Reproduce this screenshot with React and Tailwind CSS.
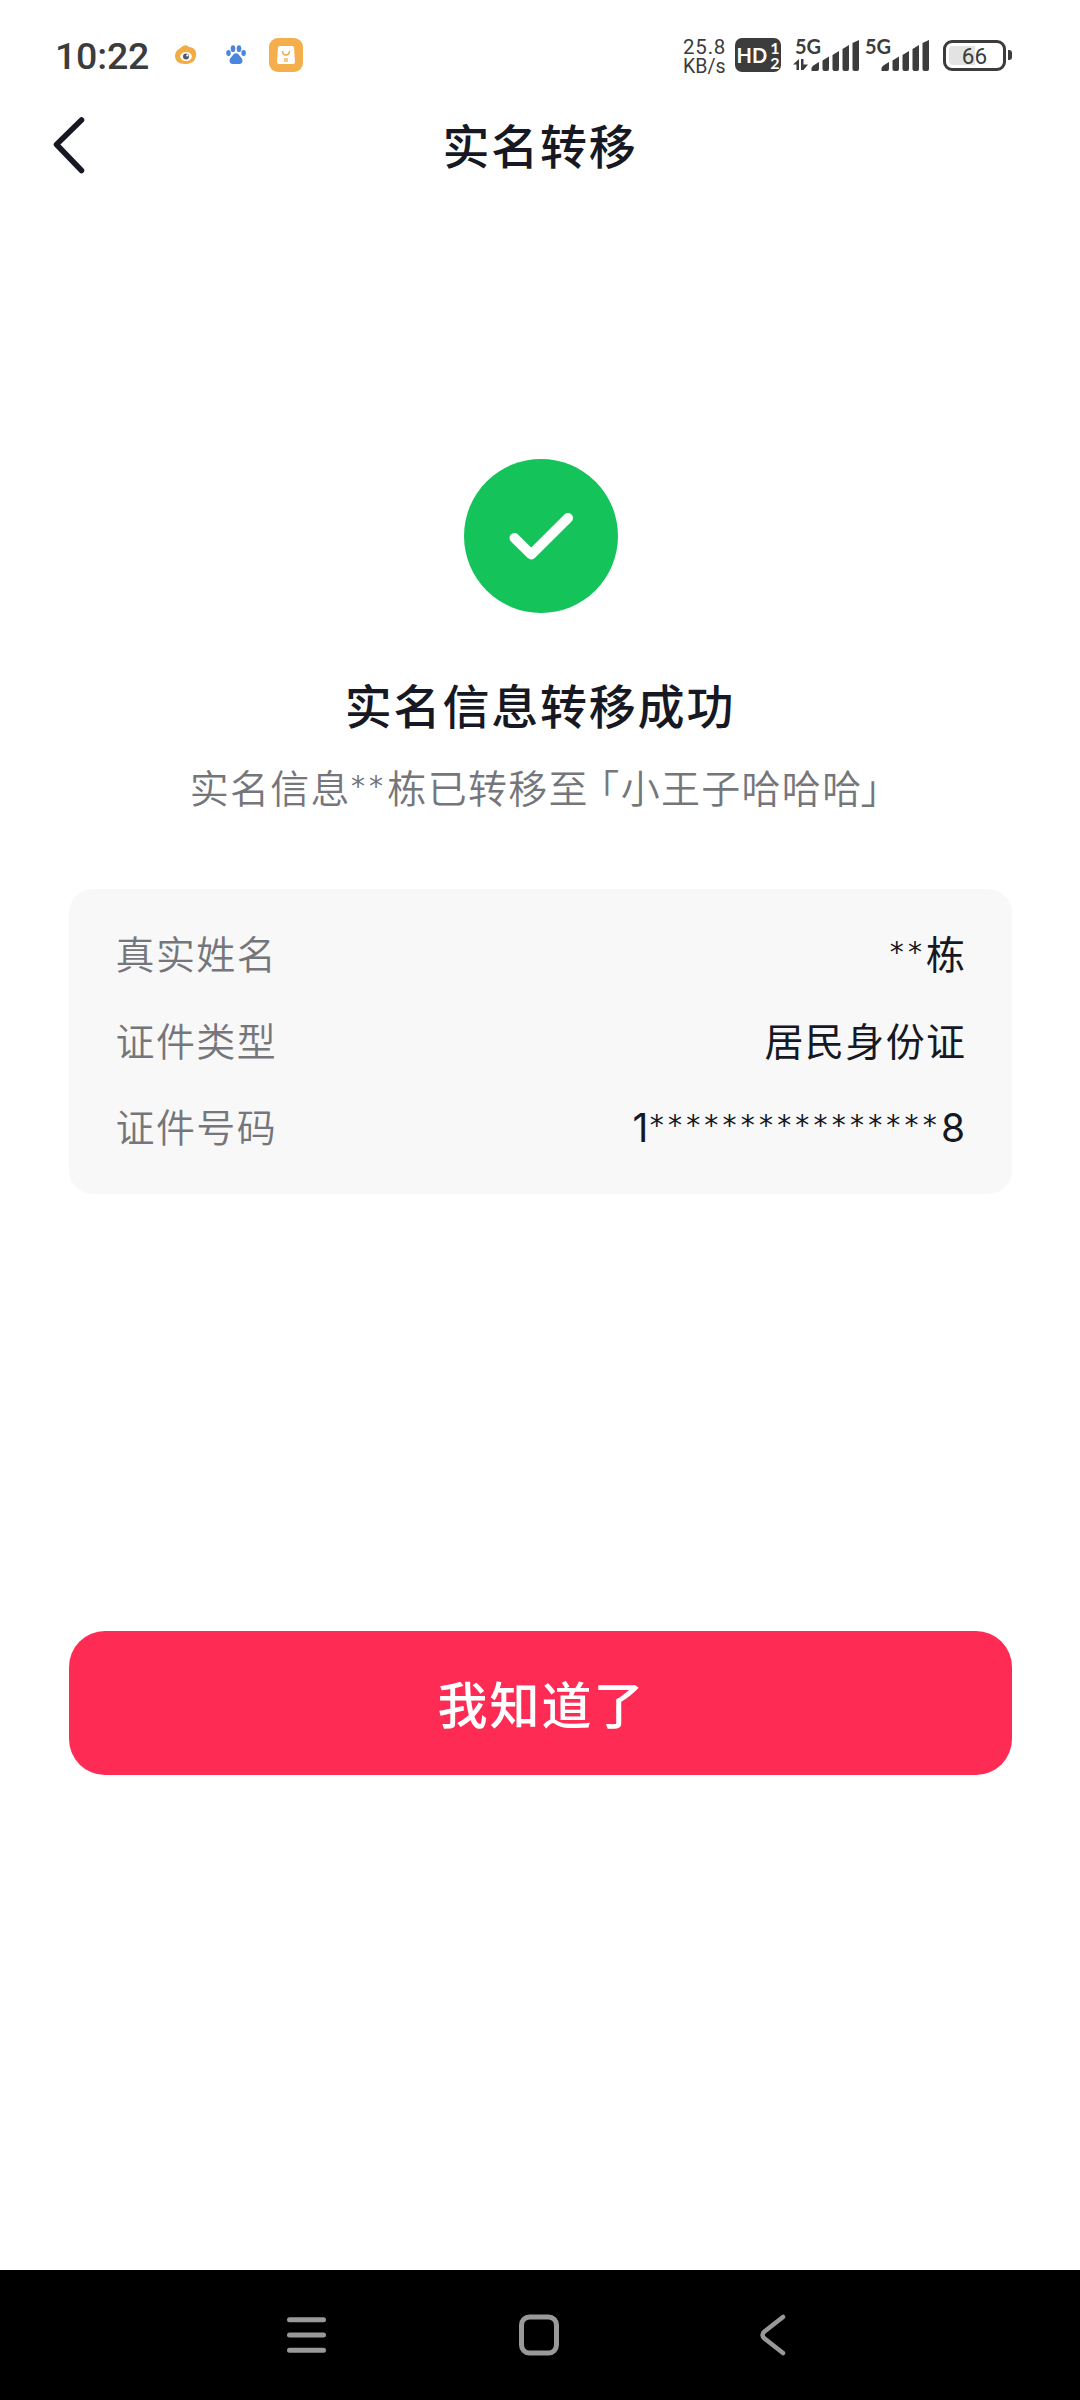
import React from 'react';

const details = [
  { label: '真实姓名', stars: '**', end: '栋' },
  { label: '证件类型', end: '居民身份证' },
  { label: '证件号码', start: '1', stars: '****************', end: '8' },
];

function Stars({ children }) {
  return (
    <span className="align-[7px] font-['DejaVu_Sans',sans-serif] text-[28px] font-normal leading-none tracking-[4.200px]">{children}</span>
  );
}

function SignalBars({ arrows }) {
  return (
    <svg width="68" height="34" viewBox="0 0 68 34" fill="#3c3c3c" className="block">
      {arrows && (
        <path d="M0 26.500l6-5.500v11H3.500v-5.500zM8 32V21h2.500v5.500H15L10.500 32z" />
      )}
      <path d="M18.500 33v-3q0-2 7.500-6v7q0 2-2 2z" />
      <path d="M29.500 31v-8.500l6.500-4V31q0 2-2 2h-2.500q-2 0-2-2z" />
      <path d="M39.500 31V17l6.500-4v18q0 2-2 2h-2.500q-2 0-2-2z" />
      <path d="M49.500 31V11L56 7v24q0 2-2 2h-2.500q-2 0-2-2z" />
      <path d="M59.500 31V5L66 2v29q0 2-2 2h-2.500q-2 0-2-2z" />
    </svg>
  );
}

function Signal({ arrows }) {
  return (
    <div className="relative h-[34px] w-[68px]">
      <SignalBars arrows={arrows} />
      <span className="absolute -top-px left-[2px] font-['Lato',sans-serif] text-[20px] font-bold leading-[18px]">5G</span>
    </div>
  );
}

function StatusBar() {
  return (
    <div className="flex h-[110px] items-center pl-[55px] pr-[68px] font-['Roboto',sans-serif] text-[#3c3c3c]">
      <span className="w-[120px] pt-[3px] text-[37.500px] font-medium leading-none tracking-[-0.200px]">10:22</span>
      <svg width="22" height="20" viewBox="0 0 22 20" className="block">
        <path d="M8 1c2-1 4-1 6 1 5 0 8 4 7 9-1 6-5 8-11 8C4 19 0 16 0 11c0-4 2-6 4-7s2-2 4-3z" fill="#f3ac45" />
        <ellipse cx="11" cy="11.5" rx="5.8" ry="4.6" fill="#fff" />
        <circle cx="11" cy="11.6" r="3" fill="#55586a" />
        <circle cx="12.3" cy="10.4" r="1.1" fill="#fff" />
      </svg>
      <svg width="20" height="20" viewBox="0 0 20 20" fill="#4a86de" className="ml-[29px] block">
        <ellipse cx="2.5" cy="8" rx="2.3" ry="3" />
        <ellipse cx="7" cy="3.7" rx="2.3" ry="3.4" />
        <ellipse cx="13" cy="3.7" rx="2.3" ry="3.4" />
        <ellipse cx="17.6" cy="8" rx="2.3" ry="3" />
        <path d="M10 8.200c2 0 3 1.500 4 3 1.500 1.800 3 3 2.400 5.500-.6 2-2.400 2.400-6.400 2.400S4.200 18.700 3.700 16.700c-.6-2.500.8-3.700 2.300-5.500 1-1.500 2-3 4-3z" />
      </svg>
      <svg width="34" height="34" viewBox="0 0 34 34" className="ml-[23px] block">
        <rect width="34" height="34" rx="9" fill="#f5ae4c" />
        <path d="M10 8h14l1 1.500L26 24q0 2-2 2H10q-2 0-2-2L9 9.500z" fill="#fff" />
        <path d="M13.500 13q0 4 3.500 4t3.500-4" fill="none" stroke="#f0a94a" strokeWidth="1.500" />
        <path d="M15 20h4v4h-4z" fill="#f7c88c" />
      </svg>
      <div className="ml-auto flex items-center">
        <div className="w-[52px] pt-[3px] text-[20.500px] leading-[19px]">
          <div className="tracking-[0.800px]">25.8</div>
          <div className="text-[19.500px]">KB/s</div>
        </div>
        <div className="flex h-[34px] w-[46px] items-center justify-center gap-[3px] rounded-[7px] bg-[#3c3c3c] font-['Lato',sans-serif] font-bold text-white">
          <span className="text-[20px] leading-none">HD</span>
          <span className="text-[16px] leading-[15px]">
            <span className="block">1</span>
            <span className="block">2</span>
          </span>
        </div>
        <div className="ml-[12px]"><Signal arrows /></div>
        <div className="ml-[2px]"><Signal /></div>
        <div className="ml-[12px] flex h-[31px] w-[63px] rounded-[9px] border-[3px] border-[#3c3c3c] p-[3px]">
          <div className="relative flex flex-1 items-center justify-center">
            <div className="absolute inset-y-0 left-0 w-[50%] rounded-l-[4px] bg-[#e3e3e3]" />
            <span className="relative pt-[2px] text-[22.500px] font-normal leading-none">66</span>
          </div>
        </div>
        <div className="ml-[2px] h-[10px] w-[4px] rounded-r-[3px] bg-[#3c3c3c]" />
      </div>
    </div>
  );
}

function Header() {
  return (
    <div className="grid h-[70px] grid-cols-[1fr_auto_1fr] items-center px-[50px]">
      <svg width="38" height="60" viewBox="0 0 38 60" fill="none" stroke="#161823" strokeWidth="5.500" strokeLinecap="round" strokeLinejoin="round">
        <path d="M31.500 5L6.500 29.500l25 26" />
      </svg>
      <h1 className="pb-[4px] text-[47px] font-medium leading-none tracking-[1.800px]">实名转移</h1>
    </div>
  );
}

function NavBar() {
  return (
    <div className="flex h-[130px] items-center bg-black pl-[286px]">
      <svg width="40" height="42" viewBox="0 0 40 42" stroke="#999" strokeWidth="5" strokeLinecap="round">
        <path d="M3.500 5.700h34M3.500 21h34M3.500 36.300h34" />
      </svg>
      <svg width="40" height="42" viewBox="0 0 40 42" fill="none" stroke="#999" strokeWidth="5" className="ml-[193px]">
        <rect x="2.5" y="3" width="35" height="36" rx="8" />
      </svg>
      <svg width="28" height="42" viewBox="0 0 28 42" fill="none" stroke="#999" strokeWidth="4.500" strokeLinecap="round" className="ml-[200px]">
        <path d="M24 3L5.500 17.500q-4 3.500 0 7L24 39" />
      </svg>
    </div>
  );
}

export default function App() {
  return (
    <div className="flex h-[2400px] w-[1080px] flex-col bg-white font-['Noto_Sans_CJK_SC',sans-serif] text-[#161823]">
      <StatusBar />
      <Header />
      <main className="flex flex-1 flex-col items-center px-[69px] pt-[279px]">
        <svg width="154" height="154" viewBox="0 0 154 154" fill="none" className="ml-[2px]">
          <circle cx="77" cy="77" r="77" fill="#15c35b" />
          <path d="M50.500 79L67.300 95.500 104 59" stroke="#fff" strokeWidth="10" strokeLinecap="round" strokeLinejoin="round" />
        </svg>
        <h2 className="mt-[65px] text-[47px] font-medium leading-[52px] tracking-[1.800px]">实名信息转移成功</h2>
        <p className="mt-[34px] h-[44px] whitespace-nowrap pr-[9px] text-[39px] font-[350] leading-[44px] tracking-[1.300px] text-[#75767b]">
          实名信息<Stars>**</Stars>栋已转移至
          <span className="ml-[11px] [font-feature-settings:'halt']">「</span>小王子哈哈哈<span className="-ml-[2px] [font-feature-settings:'halt']">」</span>
        </p>
        <div className="mt-[81px] flex h-[305px] w-[943px] flex-col justify-center gap-[42.500px] rounded-[24px] bg-[#f8f8f8] pl-[47px] pr-[45px] font-['Inter','Noto_Sans_CJK_SC',sans-serif]">
          {details.map((row) => (
            <div key={row.label} className="flex h-[44px] items-center justify-between text-[39px] leading-[44px] tracking-[1.400px]">
              <span className="font-[350] text-[#75767b]">{row.label}</span>
              <span className="h-[44px]">
                {row.start}
                {row.stars && <Stars>{row.stars}</Stars>}
                {row.end}
              </span>
            </div>
          ))}
        </div>
        <button className="mt-[437px] h-[144px] w-[943px] rounded-[36px] bg-[#fe2c55] pb-[2px] pl-[3px] text-[50px] font-medium leading-none tracking-[2px] text-white">
          我知道了
        </button>
      </main>
      <NavBar />
    </div>
  );
}
